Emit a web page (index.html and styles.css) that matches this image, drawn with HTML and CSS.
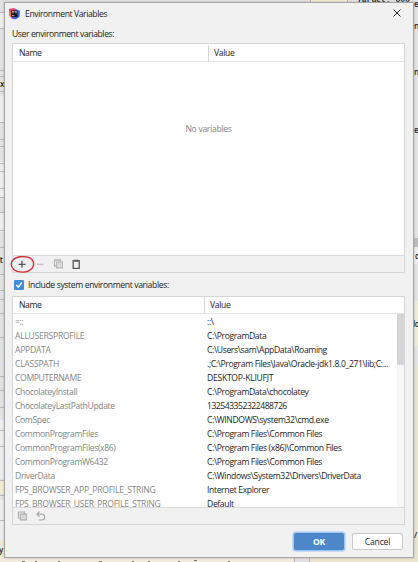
FILE: index.html
```html
<!DOCTYPE html>
<html lang="en">
<head>
<meta charset="utf-8">
<title>Environment Variables</title>
<link rel="stylesheet" href="styles.css">
</head>
<body>
<div class="backdrop" aria-hidden="true">
  <svg width="418" height="562" viewBox="0 0 418 562">
    <path fill="#e3e3e3" d="M0 0h418v562H0z"/>
    <path fill="#eeeeee" d="M0 12h4v16H0zM0 96h4v26H0zM0 162h4v36H0zM0 212h4v20H0zM0 420h4v58H0zM0 500h4v40H0zM413 247h5v17h-5z"/>
    <path fill="#f3ecd3" d="M310 0h38v3h-38zM0 480h4v14H0zM0 540h4v22H0zM413 301h5v45h-5z"/>
    <path fill="#ece4cd" d="M413 366h5v196h-5zM309 557h109v5H309z"/>
    <path fill="#e0e0e0" d="M294 557h15v5h-15z"/>
    <path fill="#f1ecdb" d="M0 557h293v5H0z"/>
    <path fill="#bcbcbc" d="M413 238h5v9h-5z"/>
    <path stroke="#b9b9b9" d="M0 12.5h4M0 28.5h4M0 70.5h4M0 76.5h4M0 91.5h4M0 122.5h4M0 139.5h4M0 146.5h4M0 163.5h4M0 171.5h4M0 188.5h4M0 197.5h4M0 212.5h4M0 230.5h4M0 247.5h4M0 274.5h4M0 290.5h4M0 299.5h4M0 313.5h4M0 337.5h4M0 376.5h4M0 390.5h4M0 407.5h4M0 430.5h4M0 446.5h4M0 480.5h4M0 495.5h4M0 520.5h4M294.5 557v5M309.5 557v5M310.5 0v3M347.5 0v3"/>
    <path stroke="#777" d="M22 561.5h3M35 561.5h2M58 561.5h2M99 561.5h3M132 561.5h2M148 561.5h2M178 561.5h2M194 560.5h3M228 561.5h2"/>
  </svg>
  <span class="frag f1">Target: 006</span>
  <span class="frag f2">e</span><span class="frag f3">nc</span><span class="frag f4">n</span><span class="frag f5">e</span><span class="frag f6">c</span><span class="frag f7">lo</span><span class="frag f8">/</span><span class="frag f9">it</span><span class="frag f10">x</span><span class="frag f11">y</span>
</div>
<main class="dialog">
  <header class="titlebar">
    <svg class="logo" width="11" height="12" viewBox="0 0 11 12"><path fill="#f33d70" d="M0 1l5-1 4 4-1 7H3L0 7z"/><path fill="#3268ee" d="M6 .5L11 3l-.5 6L6 11.5 2.5 10l5-3z"/><path fill="#fb7a3f" d="M0 4l3-1v7L.5 8z"/><path fill="#111" d="M2.2 2.5h6.3v6.5H2.2z"/><path stroke="#fff" d="M3 3.7h2M5.8 3.7h2M4 3.5v2M7 3.5v2M3 7.7h2.5" stroke-width=".7"/></svg>
    <h1>Environment Variables</h1>
    <svg class="close" width="8" height="8" viewBox="0 0 8 8"><path d="M.5.5l7 7M7.5.5l-7 7" stroke="#222" stroke-width="1"/></svg>
  </header>
  <div class="label user-label">User environment variables:</div>
  <section class="table user">
    <div class="head"><span>Name</span><span>Value</span></div>
    <div class="empty">No variables</div>
    <div class="tools">
      <svg width="80" height="16" viewBox="0 0 80 16" fill="none">
        <path d="M9 4.8v7M5.5 8.3h7" stroke="#555" stroke-width="1.3"/>
        <path d="M23.5 8.3h7" stroke="#bbb" stroke-width="1.1"/>
        <path d="M43.5 10h-2V4h6v1.5M43.7 6.2h5.6v5.6h-5.6z" stroke="#b5b5b5" stroke-width="1.3"/><path d="M45 8h3M45 10h3" stroke="#c5c5c5"/>
        <path d="M60.2 4.7h6v7.6h-6z" stroke="#555" stroke-width="1.3"/><path d="M61.5 4.7h3.5" stroke="#555" stroke-width="2"/>
      </svg>
      <svg class="ring" width="25" height="19" viewBox="0 0 25 19"><path d="M3.5 4.2C8 .9 18.500 .6 22 4.700c4.500 6-1 12.200-9.300 12.500C5 17.400 1 13 1.200 9 1.400 5 5.500 1.800 12 1.500" fill="none" stroke="#cf2830" stroke-width="1.3"/></svg>
    </div>
  </section>
  <label class="check"><svg width="10" height="10" viewBox="0 0 10 10"><rect width="10" height="10" rx="1.2" fill="#438bd5"/><path d="M2.3 5l2 2.2L7.8 2.5" fill="none" stroke="#fff" stroke-width="1.4"/></svg><span>Include system environment variables:</span></label>
  <section class="table system">
    <div class="head"><span>Name</span><span>Value</span></div>
    <div class="body">
      <div class="rows">
        <div class="row"><span>=::</span><span>::\</span></div>
        <div class="row"><span class="caps">ALLUSERSPROFILE</span><span>C:\ProgramData</span></div>
        <div class="row"><span class="caps">APPDATA</span><span>C:\Users\sam\AppData\Roaming</span></div>
        <div class="row"><span class="caps">CLASSPATH</span><span>.;C:\Program Files\Java\Oracle-jdk1.8.0_271\lib;C:...</span></div>
        <div class="row"><span>COMPUTERNAME</span><span class="caps">DESKTOP-KLIUFJT</span></div>
        <div class="row"><span>ChocolateyInstall</span><span>C:\ProgramData\chocolatey</span></div>
        <div class="row"><span>ChocolateyLastPathUpdate</span><span class="digits">132543352322488726</span></div>
        <div class="row"><span>ComSpec</span><span>C:\WINDOWS\system32\cmd.exe</span></div>
        <div class="row"><span>CommonProgramFiles</span><span>C:\Program Files\Common Files</span></div>
        <div class="row"><span>CommonProgramFiles(x86)</span><span>C:\Program Files (x86)\Common Files</span></div>
        <div class="row"><span>CommonProgramW6432</span><span>C:\Program Files\Common Files</span></div>
        <div class="row"><span>DriverData</span><span>C:\Windows\System32\Drivers\DriverData</span></div>
        <div class="row"><span class="caps">FPS_BROWSER_APP_PROFILE_STRING</span><span>Internet Explorer</span></div>
        <div class="row"><span class="caps">FPS_BROWSER_USER_PROFILE_STRING</span><span>Default</span></div>
      </div>
      <div class="scroll"><i></i></div>
    </div>
    <div class="tools">
      <svg width="40" height="16" viewBox="0 0 40 16" fill="none">
        <path d="M7.5 10h-2V4h6v1.5M7.7 6.2h5.6v5.6H7.7z" stroke="#aaa" stroke-width="1.2"/><path d="M9 8h3M9 10h3" stroke="#bbb"/>
        <path d="M26.500 3.500L24 6.200l2.500 2.600M24.300 6.200h4.500a2.800 2.800 0 0 1 0 5.800H25.500" stroke="#aaa" stroke-width="1.2"/>
      </svg>
    </div>
  </section>
  <footer><button class="ok">OK</button><button class="cancel">Cancel</button></footer>
</main>
</body>
</html>
```
FILE: styles.css
```css
* { box-sizing: border-box; }
body { margin: 0; width: 418px; height: 562px; overflow: hidden; position: relative; font: 8.6px/14px "Open Sans", "Noto Sans", sans-serif; color: #1c1c1c; letter-spacing: -.36px; padding: 2px 0 0 4px; }
.backdrop { position: absolute; inset: 0; overflow: hidden; }
.backdrop svg { display: block; }
.frag { position: absolute; left: 414px; white-space: nowrap; font-size: 8px; font-weight: 600; line-height: 10px; }
.f1 { left: 357px; top: -5px; font-family: "Liberation Mono", monospace; letter-spacing: 0; }
.f2 { top: -1px; }
.f3 { top: 21px; }
.f4 { top: 67px; }
.f5 { top: 125px; }
.f6 { top: 251px; left: 415px; }
.f7 { top: 319px; left: 413px; }
.f8 { top: 530px; }
.f9 { left: -2px; top: 255px; }
.f10 { left: 0; top: 79px; }
.f11 { left: -1px; top: 545px; }
.dialog { position: relative; width: 410px; height: 556px; background: #f1f1f1; border: 1px solid #a6a6a6; box-shadow: 0 0 2px #8888; padding: 0 8px 0 7px; display: flex; flex-direction: column; }
.titlebar { height: 22px; display: flex; align-items: center; flex: none; }
.logo { margin: -1px 0 0 -3px; }
h1 { font: inherit; letter-spacing: -.4px; margin: 0 0 0 5px; }
.close { margin: -2px 4px 0 auto; }
.user-label { height: 17px; line-height: 17px; flex: none; margin-top: 1px; letter-spacing: -.4px; }
.table { border: 1px solid #d5d5d5; background: #fff; display: flex; flex-direction: column; flex: none; }
.user { height: 230px; }
.system { height: 229px; }
.head { height: 18px; flex: none; border-bottom: 1px solid #e4e4e4; display: grid; grid-template-columns: 195px 1fr; align-items: center; }
.head span { padding-left: 6px; line-height: 16px; }
.head span + span { border-left: 1px solid #d5d5d5; padding-left: 5px; }
.system .head { grid-template-columns: 191px 1fr; height: 17px; }
.empty { flex: 1; padding-top: 60px; text-align: center; color: #858585; letter-spacing: -.3px; }
.tools { height: 17px; flex: none; border-top: 1px solid #dadada; background: #f1f1f1; position: relative; }
.tools svg { display: block; }
.tools .ring { position: absolute; left: -3px; top: -1px; }
.check { display: flex; align-items: center; gap: 4px; height: 23px; flex: none; padding-left: 2px; }
.body { flex: 1; min-height: 0; overflow: hidden; display: flex; }
.rows { flex: 1; min-width: 0; overflow: hidden; padding-top: 1px; }
.row { display: grid; grid-template-columns: 192px 1fr; height: 14px; line-height: 14px; white-space: nowrap; }
.row span { padding-left: 2px; }
.row span:first-child { color: #858585; }
.row .caps { letter-spacing: -.27px; }
.row .digits { letter-spacing: -.48px; }
.scroll { width: 7px; background: #f7f7f7; }
.scroll i { display: block; height: 51px; background: #d5d5d5; }
footer { display: flex; justify-content: flex-end; align-items: flex-start; gap: 8px; padding: 8px 2px 0 0; }
button { font: inherit; letter-spacing: -.2px; height: 17px; padding: 0; border: 1px solid #c9c9c9; border-radius: 2px; background: #fff; color: #222; width: 51px; line-height: 14px; }
.ok { width: 50px; color: #fff; background: #4b87c9; border-color: #4b87c9; font-weight: 700; box-shadow: 0 0 0 1.5px #9dc6f3; }
```
